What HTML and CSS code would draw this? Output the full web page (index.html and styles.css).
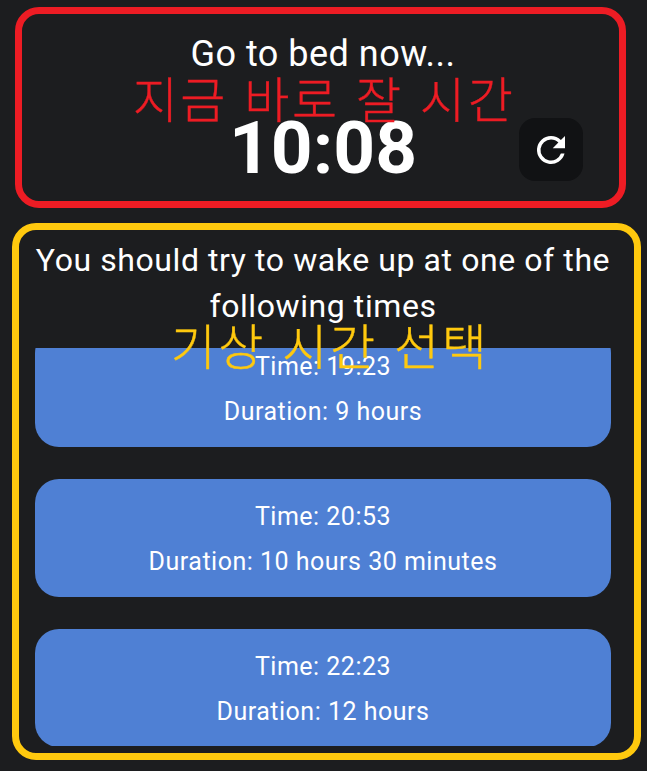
FILE: index.html
```html
<!DOCTYPE html>
<html lang="en">
<head>
<meta charset="utf-8">
<title>Sleep times</title>
<link rel="stylesheet" href="styles.css">
</head>
<body>
<main class="screen">
  <section class="now">
    <p class="now-label">Go to bed now...</p>
    <p class="now-time">10:08</p>
    <button class="refresh" aria-label="Refresh">
      <svg viewBox="0 0 24 24" width="42" height="42"><path fill="#fff" d="M17.65 6.35A7.96 7.96 0 0 0 12 4a8 8 0 1 0 7.73 10h-2.08A6 6 0 1 1 12 6c1.66 0 3.14.69 4.22 1.78L13 11h7V4l-2.35 2.35z"/></svg>
    </button>
    <span class="note note-red" lang="ko">지금 바로 잘 시간</span>
  </section>
  <section class="wake">
    <h1 class="wake-title">You should try to wake up at one of the following times</h1>
    <div class="list">
      <div class="list-inner">
        <div class="card"><p>Time: 19:23</p><p>Duration: 9 hours</p></div>
        <div class="card"><p>Time: 20:53</p><p>Duration: 10 hours 30 minutes</p></div>
        <div class="card"><p>Time: 22:23</p><p>Duration: 12 hours</p></div>
      </div>
    </div>
    <span class="note note-yellow" lang="ko">기상 시간 선택</span>
  </section>
</main>
</body>
</html>
```
FILE: styles.css
```css
* { box-sizing: border-box; }
html, body { margin: 0; height: 100%; }
body {
  background: #1c1d1f;
  color: #fff;
  font-family: Roboto, "Noto Sans CJK KR", sans-serif;
  overflow: hidden;
}
p, h1 { margin: 0; font-weight: 400; }
.screen {
  display: flex;
  flex-direction: column;
  align-items: flex-start;
  padding: 7px 0 0 12px;
  gap: 15px;
}
.now {
  position: relative;
  width: 611px;
  height: 201px;
  margin-left: 3px;
  border: 7px solid #ed1c24;
  border-radius: 24px;
  display: flex;
  flex-direction: column;
  align-items: center;
  padding: 16px 0 0 5px;
}
.now-label { font-size: 36px; line-height: 48px; letter-spacing: 0.5px; }
.now-time { font-size: 73px; font-weight: 700; line-height: 84px; margin-top: 28px; }
.refresh {
  position: absolute;
  left: 497px;
  top: 104px;
  width: 64px;
  height: 63px;
  border: 0;
  border-radius: 16px;
  background: #111214;
  display: flex;
  align-items: center;
  justify-content: center;
  padding: 0;
}
.note {
  position: absolute;
  font-family: "Noto Sans CJK KR", sans-serif;
  font-weight: 300;
  font-size: 49px;
  line-height: 56px;
  letter-spacing: 2.6px;
  -webkit-text-stroke: 0.4px currentColor;
  white-space: nowrap;
  transform: translateX(-50%);
}
.note-red { color: #ed1c24; top: 55px; left: 302px; }
.note-yellow { color: #ffc90e; top: 86px; left: 311px; }
.wake {
  position: relative;
  width: 629px;
  height: 537px;
  border: 7px solid #ffc90e;
  border-radius: 24px;
  padding: 7px 23px 0 16px;
  display: flex;
  flex-direction: column;
}
.wake-title { font-size: 32px; line-height: 46px; text-align: center; letter-spacing: 0.58px; }
.list { height: 398px; margin-top: 19px; overflow: hidden; }
.list-inner { margin-top: -19px; display: flex; flex-direction: column; gap: 32px; }
.card {
  height: 118px;
  background: #4f80d4;
  border-radius: 24px;
  padding: 14.5px 0;
  text-align: center;
  font-size: 25px;
  line-height: 45px;
  letter-spacing: 0.5px;
}
```
